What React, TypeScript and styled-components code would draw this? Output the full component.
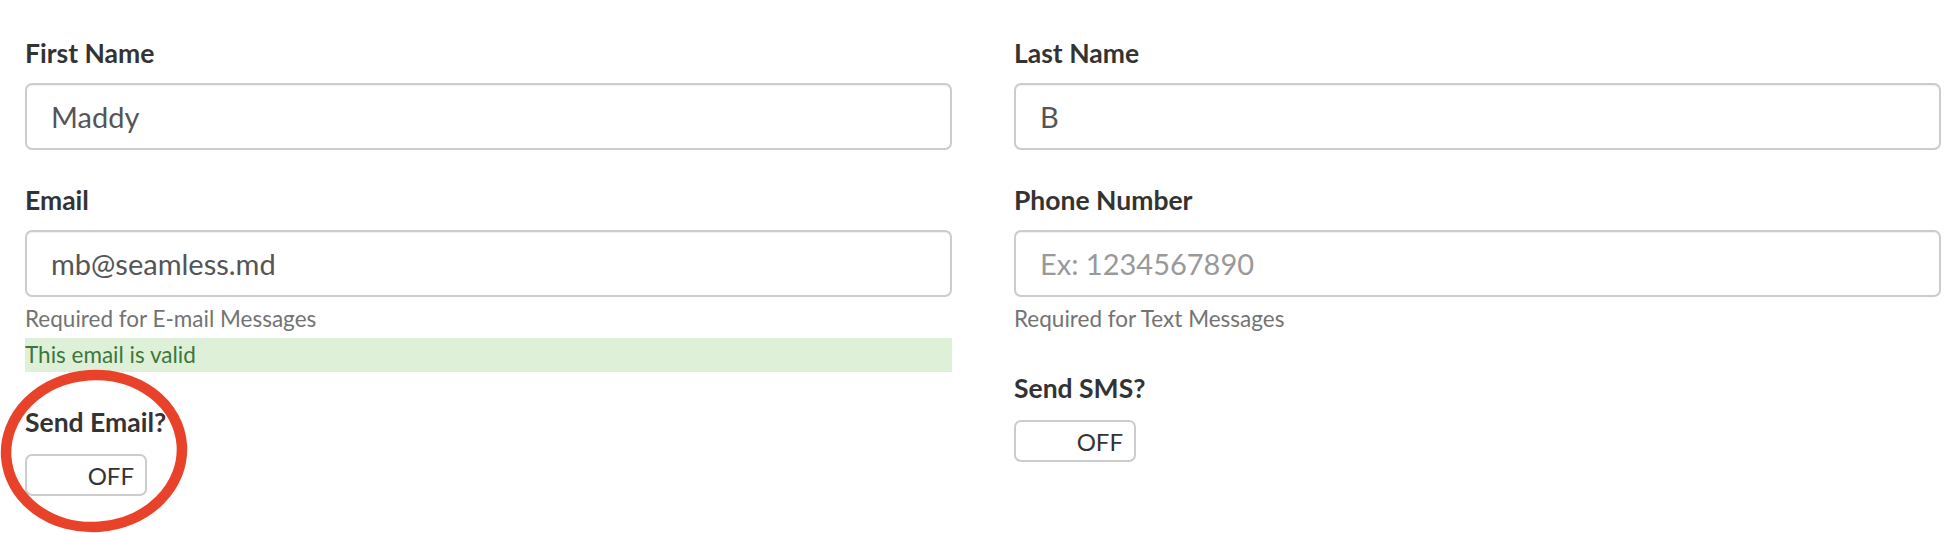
import React from "react";
import styled, { createGlobalStyle } from "styled-components";

const GlobalStyle = createGlobalStyle`
  html, body {
    margin: 0;
    padding: 0;
    background: #ffffff;
  }
  body {
    font-family: Lato, "Open Sans", sans-serif;
    color: #333333;
  }
`;

const Page = styled.div`
  position: relative;
  width: 1950px;
  height: 534px;
  box-sizing: border-box;
  padding: 38px 0 0 25px;
  display: grid;
  grid-template-columns: 927px 927px;
  column-gap: 62px;
  align-items: start;
`;

const Column = styled.div`
  display: flex;
  flex-direction: column;
`;

const FormGroup = styled.div`
  display: flex;
  flex-direction: column;
  margin-bottom: 35px;
`;

const Label = styled.label`
  display: block;
  font-size: 26.5px;
  line-height: 30px;
  font-weight: 700;
  color: #333333;
  margin-bottom: 15px;
`;

const Input = styled.input`
  box-sizing: border-box;
  width: 100%;
  height: 67px;
  padding: 0 24px;
  border: 2px solid #cccccc;
  border-radius: 7px;
  box-shadow: inset 0 1px 1px rgba(0, 0, 0, 0.06);
  font-family: Lato, "Open Sans", sans-serif;
  font-size: 29px;
  color: #555555;
  background: #ffffff;
  outline: none;

  &::placeholder {
    color: #999999;
  }
`;

const HelpText = styled.span`
  display: block;
  margin-top: 9px;
  margin-bottom: 7px;
  font-size: 22.5px;
  line-height: 25px;
  color: #737373;
`;

const ValidNote = styled.div`
  height: 34px;
  line-height: 34px;
  font-size: 22.5px;
  background: #dff0d8;
  color: #3c763d;
`;

const Switch = styled.div`
  box-sizing: border-box;
  width: 122px;
  height: 42px;
  border: 2px solid #cccccc;
  border-radius: 7px;
  display: flex;
  align-items: center;
  justify-content: flex-end;
  padding-right: 11px;
  font-size: 24px;
  color: #333333;
  background: #ffffff;
  margin-top: 2px;
`;

const Annotation = styled.svg`
  position: absolute;
  left: 0;
  top: 366px;
  pointer-events: none;
`;

const Field: React.FC<{
  label: string;
  value?: string;
  placeholder?: string;
  help?: string;
  valid?: string;
}> = ({ label, value, placeholder, help, valid }) => (
  <FormGroup>
    <Label>{label}</Label>
    <Input readOnly value={value ?? ""} placeholder={placeholder} />
    {help && <HelpText>{help}</HelpText>}
    {valid && <ValidNote>{valid}</ValidNote>}
  </FormGroup>
);

const Toggle: React.FC<{ label: string }> = ({ label }) => (
  <FormGroup>
    <Label>{label}</Label>
    <Switch>OFF</Switch>
  </FormGroup>
);

export default function App() {
  return (
    <>
      <GlobalStyle />
      <Page>
        <Column>
          <Field label="First Name" value="Maddy" />
          <Field
            label="Email"
            value="mb@seamless.md"
            help="Required for E-mail Messages"
            valid="This email is valid"
          />
          <Toggle label="Send Email?" />
        </Column>
        <Column>
          <Field label="Last Name" value="B" />
          <Field
            label="Phone Number"
            placeholder="Ex: 1234567890"
            help="Required for Text Messages"
          />
          <Toggle label="Send SMS?" />
        </Column>
        <Annotation width="200" height="170" viewBox="0 0 200 170">
          <ellipse
            cx="94"
            cy="85"
            rx="88"
            ry="76"
            fill="none"
            stroke="#e8432a"
            strokeWidth="10.5"
            transform="rotate(-4 94 85)"
          />
        </Annotation>
      </Page>
    </>
  );
}
